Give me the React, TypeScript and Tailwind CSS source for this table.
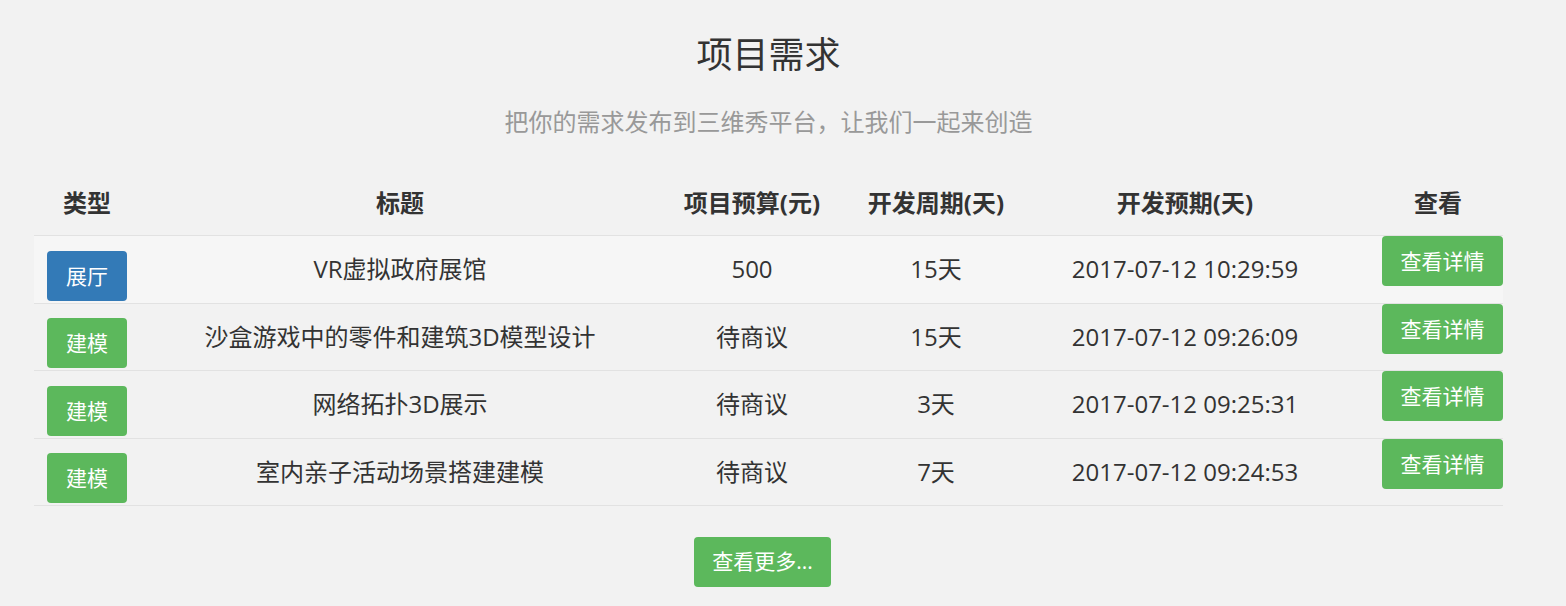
const rows = [
  { type: "展厅", primary: true, title: "VR虚拟政府展馆", budget: "500", period: "15天", date: "2017-07-12 10:29:59" },
  { type: "建模", primary: false, title: "沙盒游戏中的零件和建筑3D模型设计", budget: "待商议", period: "15天", date: "2017-07-12 09:26:09" },
  { type: "建模", primary: false, title: "网络拓扑3D展示", budget: "待商议", period: "3天", date: "2017-07-12 09:25:31" },
  { type: "建模", primary: false, title: "室内亲子活动场景搭建建模", budget: "待商议", period: "7天", date: "2017-07-12 09:24:53" },
];

const cols = "grid grid-cols-[106px_520px_184px_184px_314px_161px]";

export default function App() {
  return (
    <main
      className="min-h-screen w-full bg-[#f2f2f2] text-[#333]"
      style={{ fontFamily: '"Open Sans", "Noto Sans CJK SC", sans-serif' }}
    >
      <div className="ml-[34px] w-[1469px]">
        <h1 className="pt-[35px] text-center text-[36px] leading-[40px] font-normal">项目需求</h1>
        <p className="mt-[30px] text-center text-[24px] leading-[34px] text-[#999]">
          把你的需求发布到三维秀平台，让我们一起来创造
        </p>

        <div className={`${cols} mt-[40px] border-b border-[#e2e2e2] pt-[7px] pb-[15px] text-[24px] leading-[34px] font-bold text-[#333]`}>
          <div className="text-center">类型</div>
          <div className="text-center">标题</div>
          <div className="text-center">项目预算(元)</div>
          <div className="text-center">开发周期(天)</div>
          <div className="text-center">开发预期(天)</div>
          <div className="pl-[31px] text-center">查看</div>
        </div>

        {rows.map((row, i) => (
          <div
            key={row.title}
            className={`${cols} box-border h-[67.5px] items-center border-b border-[#e2e2e2] text-[24px] leading-[34px] ${
              i === 0 ? "bg-[#f6f6f6]" : ""
            }`}
          >
            <div className="self-start pt-[14.5px] pl-[13px]">
              <span
                className={`flex h-[50px] w-[80px] items-center justify-center rounded-[4px] text-[21px] text-white ${
                  row.primary ? "bg-[#337ab7]" : "bg-[#5cb85c]"
                }`}
              >
                {row.type}
              </span>
            </div>
            <div className="text-center">{row.title}</div>
            <div className="text-center">{row.budget}</div>
            <div className="text-center">{row.period}</div>
            <div className="text-center">{row.date}</div>
            <div className="flex self-start justify-end">
              <button className="h-[50px] w-[121px] rounded-[4px] bg-[#5cb85c] text-[21px] text-white">查看详情</button>
            </div>
          </div>
        ))}

        <div className="mt-[30.5px] flex justify-center">
          <button className="mr-[12px] h-[50px] w-[137px] rounded-[4px] bg-[#5cb85c] text-[21px] text-white">
            查看更多...
          </button>
        </div>
      </div>
    </main>
  );
}
